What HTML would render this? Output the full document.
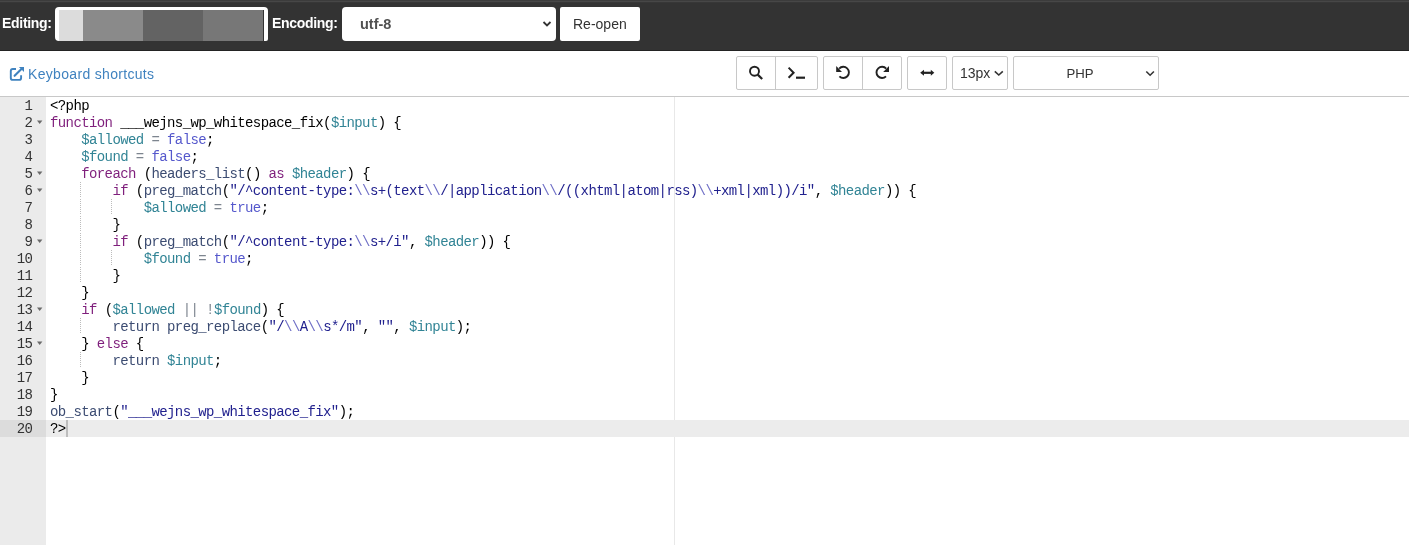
<!DOCTYPE html>
<html><head><meta charset="utf-8">
<style>
*{box-sizing:border-box}
#wrap{position:absolute;left:0;top:0;width:1409px;height:545px;will-change:transform}
html,body{margin:0;padding:0;width:1409px;height:545px;overflow:hidden;background:#fff;font-family:"Liberation Sans",sans-serif}
.abs{position:absolute}
#top{left:0;top:0;width:1409px;height:51px;background:#333;border-bottom:1px solid #232323}
#top .l0{left:0;top:0;width:1409px;height:1px;background:#3c3c3c}
#top .l1{left:0;top:1px;width:1409px;height:1px;background:#474747}
#top .l2{left:0;top:2px;width:1409px;height:1px;background:#373737}
.lbl{color:#fff;font-weight:bold;font-size:14px;letter-spacing:-0.3px;line-height:16px}
#fname{left:55px;top:7px;width:213px;height:34px;background:#fff;border-radius:4px 4px 2px 4px}
#fname div{position:absolute;top:3px;height:31px}
#enc{left:342px;top:7px;width:214px;height:34px;background:#fff;border-radius:4px}
#reopen{left:560px;top:7px;width:80px;height:34px;background:#fff;border-radius:2px}
.txt{white-space:pre;line-height:16px}
.tb{position:absolute;top:56px;height:34px;border:1px solid #c8c8c8;border-radius:2px;background:#fff}
.div{position:absolute;top:57px;width:1px;height:32px;background:#c8c8c8}
#hr{left:0;top:96px;width:1409px;height:1px;background:#c8c8c8}
#gutter{left:0;top:97px;width:46px;height:448px;background:#ebebeb}
#code{left:0;top:98px;width:1409px;font-family:"Liberation Mono",monospace;font-size:14px;letter-spacing:-0.6px}
.ln{position:absolute;left:0;width:32.4px;text-align:right;height:17px;line-height:17px;color:#333}
.cl{position:absolute;left:50px;height:17px;line-height:17px;white-space:pre;color:#000}
.fold{position:absolute;left:37px}
.k{color:#7f1f7c}
.f{color:#3c4c72}
.v{color:#318495}
.c{color:#5558cc}
.o{color:#7d858f}
.s{color:#21218e}
.e{color:#6e6ec6}
.guide{position:absolute;width:1px;height:16px;background-image:linear-gradient(#bcbcbc 50%,transparent 50%);background-size:1px 2px}
</style></head><body><div id="wrap">
<div id="top" class="abs">
  <div class="abs l0"></div><div class="abs l1"></div><div class="abs l2"></div>
  <div class="abs lbl" style="left:2px;top:15.4px">Editing:</div>
  <div id="fname" class="abs">
    <div style="left:4px;width:24px;background:#dcdcdc"></div>
    <div style="left:28px;width:60px;background:#8a8a8a"></div>
    <div style="left:88px;width:60px;background:#636363"></div>
    <div style="left:148px;width:60px;background:#777"></div>
    <div style="left:208px;width:1px;background:#333"></div>
  </div>
  <div class="abs lbl" style="left:272px;top:15.4px">Encoding:</div>
  <div id="enc" class="abs">
    <div class="abs txt" style="left:18px;top:9px;font-size:14.5px;font-weight:bold;color:#505050">utf-8</div>
    <svg class="abs" style="left:200px;top:13px" width="10" height="8" viewBox="0 0 10 8"><path d="M1.5 2 L5 5.5 L8.5 2" fill="none" stroke="#333" stroke-width="1.8"/></svg>
  </div>
  <div id="reopen" class="abs">
    <div class="abs txt" style="left:13px;top:9px;font-size:14px;color:#333">Re-open</div>
  </div>
</div>

<svg class="abs" style="left:0;top:60px" width="30" height="25" viewBox="0 60 30 25">
  <path d="M16 69 H12.8 Q10.8 69 10.8 71 V77.9 Q10.8 79.9 12.8 79.9 H19.1 Q21.1 79.9 21.1 77.9 V75.3" fill="none" stroke="#3f82bf" stroke-width="1.9"/>
  <path d="M14.6 75.8 L21.2 69.2" stroke="#3f82bf" stroke-width="2.1" stroke-linecap="round"/>
  <path d="M18.9 66.9 H24 V72 Z" fill="#3f82bf"/>
</svg>
<div class="abs txt" style="left:28px;top:65.6px;font-size:14px;color:#3f82bf;letter-spacing:0.32px">Keyboard shortcuts</div>

<!-- toolbar -->
<div class="tb" style="left:736px;width:82px"></div>
<div class="div" style="left:775px"></div>
<div class="tb" style="left:823px;width:79px"></div>
<div class="div" style="left:862px"></div>
<div class="tb" style="left:907px;width:40px"></div>
<div class="tb" style="left:952px;width:56px"></div>
<div class="tb" style="left:1013px;width:146px"></div>


<svg class="abs" style="left:0;top:0" width="1409" height="100" viewBox="0 0 1409 100">
 <g fill="none" stroke="#222" stroke-width="1.9">
  <circle cx="754.5" cy="71.2" r="4.5"/>
  <path d="M757.7 74.6 L762.2 79" stroke-width="2.2"/>
  <path d="M788.6 67.6 L793.6 72.7 L788.6 77.8" stroke-width="2"/>
  <path d="M796 77.7 H805" stroke-width="2.2"/>
  <path d="M839.2 68.6 A5.6 5.6 0 1 1 839.4 76.4"/>
  <path d="M886.2 68.6 A5.6 5.6 0 1 0 886 76.4"/>
  <path d="M923 72.8 H931.5" stroke-width="2.2"/>
 </g>
 <g fill="#222">
  <path d="M836.2 66 V71.9 H842 Z"/>
  <path d="M889 66 V71.9 H883.2 Z"/>
  <path d="M920.2 72.8 L924 69.8 V75.8 Z"/>
  <path d="M934.3 72.8 L930.8 69.8 V75.8 Z"/>
 </g>
 <g fill="none" stroke="#333" stroke-width="1.6">
  <path d="M994.8 71.3 L998.8 75 L1002.8 71.3"/>
  <path d="M1146.3 71.5 L1150.1 75.2 L1153.9 71.5"/>
 </g>
</svg>
<div class="abs txt" style="left:960px;top:65px;font-size:14px;color:#333">13px</div>
<div class="abs txt" style="left:1066.4px;top:65.5px;font-size:13.2px;color:#333">PHP</div>
<div id="hr" class="abs"></div>
<div id="gutter" class="abs"></div>
<div class="abs" style="left:674px;top:97px;width:1px;height:448px;background:#e8e8e8"></div>
<div class="abs" style="left:0;top:420px;width:46px;height:17px;background:#dcdcdc"></div>
<div class="abs" style="left:46px;top:420px;width:1363px;height:17px;background:#ececec"></div>
<div class="abs" style="left:66px;top:420px;width:2px;height:17px;background:#bdbdbd"></div>

<div id="code" class="abs">
<!--CODE-->
<div class="ln" style="top:0px">1</div>
<div class="cl" style="top:0px">&lt;?php</div>
<div class="ln" style="top:17px">2</div>
<svg class="fold" style="top:22px" width="6" height="5"><path d="M0 0.6 H5.4 L2.7 4.1 Z" fill="#6a6a6a"/></svg>
<div class="cl" style="top:17px"><span class="k">function</span> ___wejns_wp_whitespace_fix(<span class="v">$input</span>) {</div>
<div class="ln" style="top:34px">3</div>
<div class="cl" style="top:34px">    <span class="v">$allowed</span><span class="o"> = </span><span class="c">false</span>;</div>
<div class="ln" style="top:51px">4</div>
<div class="cl" style="top:51px">    <span class="v">$found</span><span class="o"> = </span><span class="c">false</span>;</div>
<div class="ln" style="top:68px">5</div>
<svg class="fold" style="top:73px" width="6" height="5"><path d="M0 0.6 H5.4 L2.7 4.1 Z" fill="#6a6a6a"/></svg>
<div class="cl" style="top:68px">    <span class="k">foreach</span> (<span class="f">headers_list</span>() <span class="k">as</span> <span class="v">$header</span>) {</div>
<div class="ln" style="top:85px">6</div>
<svg class="fold" style="top:90px" width="6" height="5"><path d="M0 0.6 H5.4 L2.7 4.1 Z" fill="#6a6a6a"/></svg>
<div class="cl" style="top:85px">        <span class="k">if</span> (<span class="f">preg_match</span>(<span class="s">&quot;/^content-type:</span><span class="e">\\</span><span class="s">s+(text</span><span class="e">\\</span><span class="s">/|application</span><span class="e">\\</span><span class="s">/((xhtml|atom|rss)</span><span class="e">\\</span><span class="s">+xml|xml))/i&quot;</span>, <span class="v">$header</span>)) {</div>
<div class="ln" style="top:102px">7</div>
<div class="cl" style="top:102px">            <span class="v">$allowed</span><span class="o"> = </span><span class="c">true</span>;</div>
<div class="ln" style="top:119px">8</div>
<div class="cl" style="top:119px">        }</div>
<div class="ln" style="top:136px">9</div>
<svg class="fold" style="top:141px" width="6" height="5"><path d="M0 0.6 H5.4 L2.7 4.1 Z" fill="#6a6a6a"/></svg>
<div class="cl" style="top:136px">        <span class="k">if</span> (<span class="f">preg_match</span>(<span class="s">&quot;/^content-type:</span><span class="e">\\</span><span class="s">s+/i&quot;</span>, <span class="v">$header</span>)) {</div>
<div class="ln" style="top:153px">10</div>
<div class="cl" style="top:153px">            <span class="v">$found</span><span class="o"> = </span><span class="c">true</span>;</div>
<div class="ln" style="top:170px">11</div>
<div class="cl" style="top:170px">        }</div>
<div class="ln" style="top:187px">12</div>
<div class="cl" style="top:187px">    }</div>
<div class="ln" style="top:204px">13</div>
<svg class="fold" style="top:209px" width="6" height="5"><path d="M0 0.6 H5.4 L2.7 4.1 Z" fill="#6a6a6a"/></svg>
<div class="cl" style="top:204px">    <span class="k">if</span> (<span class="v">$allowed</span><span class="o"> || !</span><span class="v">$found</span>) {</div>
<div class="ln" style="top:221px">14</div>
<div class="cl" style="top:221px">        <span class="f">return</span> <span class="f">preg_replace</span>(<span class="s">&quot;/</span><span class="e">\\</span><span class="s">A</span><span class="e">\\</span><span class="s">s*/m&quot;</span>, <span class="s">&quot;&quot;</span>, <span class="v">$input</span>);</div>
<div class="ln" style="top:238px">15</div>
<svg class="fold" style="top:243px" width="6" height="5"><path d="M0 0.6 H5.4 L2.7 4.1 Z" fill="#6a6a6a"/></svg>
<div class="cl" style="top:238px">    } <span class="k">else</span> {</div>
<div class="ln" style="top:255px">16</div>
<div class="cl" style="top:255px">        <span class="f">return</span> <span class="v">$input</span>;</div>
<div class="ln" style="top:272px">17</div>
<div class="cl" style="top:272px">    }</div>
<div class="ln" style="top:289px">18</div>
<div class="cl" style="top:289px">}</div>
<div class="ln" style="top:306px">19</div>
<div class="cl" style="top:306px"><span class="f">ob_start</span>(<span class="s">&quot;___wejns_wp_whitespace_fix&quot;</span>);</div>
<div class="ln" style="top:323px">20</div>
<div class="cl" style="top:323px">?&gt;</div>
<div class="guide" style="left:80px;top:84px"></div>
<div class="guide" style="left:80px;top:101px"></div>
<div class="guide" style="left:80px;top:118px"></div>
<div class="guide" style="left:80px;top:135px"></div>
<div class="guide" style="left:80px;top:152px"></div>
<div class="guide" style="left:80px;top:169px"></div>
<div class="guide" style="left:111px;top:101px"></div>
<div class="guide" style="left:111px;top:152px"></div>
<div class="guide" style="left:80px;top:220px"></div>
<div class="guide" style="left:80px;top:254px"></div>
<!--/CODE-->
</div>
</div></body></html>
